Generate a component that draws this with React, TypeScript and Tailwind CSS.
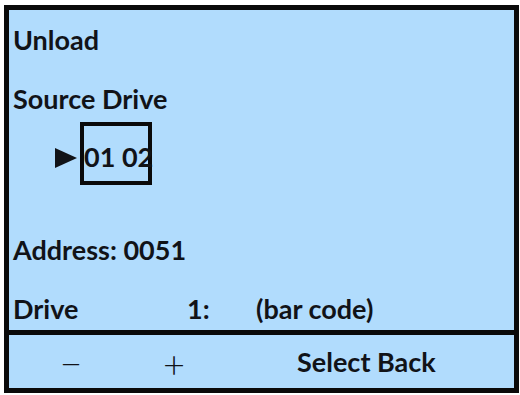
import React from "react";

export default function App() {
  return (
    <div className="w-[520px] h-[395px] bg-white pt-[5px] pl-[4px]" style={{ fontFamily: "Lato, 'Noto Sans', sans-serif" }}>
      <div className="w-[515px] h-[388px] border-[5px] border-[#0a0a0a] bg-[#b1dcfd] flex flex-col text-[#111318] font-bold text-[27px] leading-[30px]">
        <div className="h-[320px] pl-[4px] flex flex-col">
          <div className="mt-[15px]">Unload</div>
          <div className="mt-[29px]">Source Drive</div>
          <div className="mt-[8px] flex items-center">
            <svg width="22" height="20" viewBox="0 0 22 20" className="ml-[42px] mt-[8px]">
              <polygon points="0,0 22,10 0,20" fill="#111318" />
            </svg>
            <div className="relative ml-[3px] w-[72px] h-[63px] border-[4px] border-[#0a0a0a]">
              <span className="absolute left-[0px] top-[16px] whitespace-nowrap">01 02</span>
            </div>
          </div>
          <div className="mt-[50px]">Address: 0051</div>
          <div className="mt-[29px] flex">
            <span className="w-[174px]">Drive</span>
            <span className="w-[69px]">1:</span>
            <span>(bar code)</span>
          </div>
        </div>
        <div className="h-[5px] bg-[#0a0a0a]"></div>
        <div className="flex-1 flex items-center">
          <span className="ml-[53px] w-[18px] font-normal text-[18px] leading-[30px] mt-[2px] font-['DejaVu_Sans']">—</span>
          <span className="ml-[83px] font-light text-[38px] leading-[30px] mt-[2px]">+</span>
          <span className="ml-[112px]">Select Back</span>
        </div>
      </div>
    </div>
  );
}
